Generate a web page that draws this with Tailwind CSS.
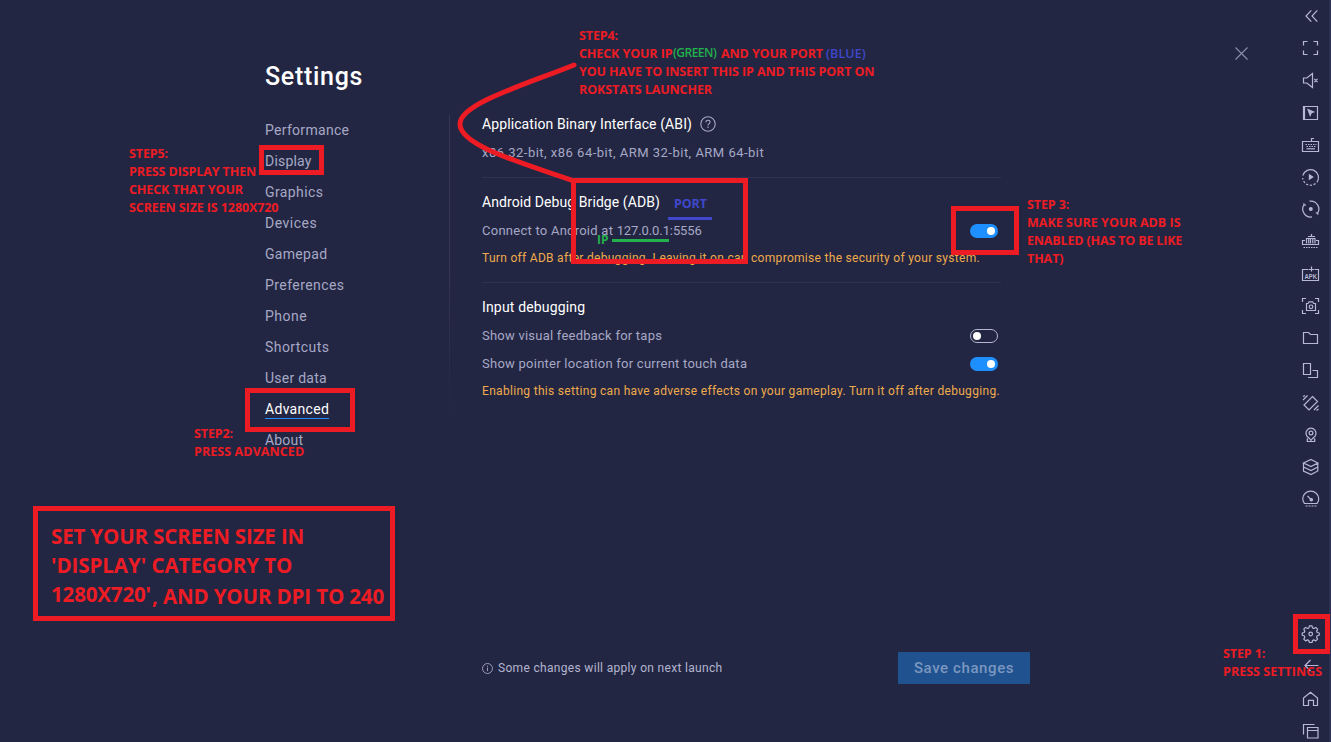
<!DOCTYPE html>
<html lang="en">
<head>
<meta charset="utf-8">
<title>Settings</title>
<script src="https://cdn.jsdelivr.net/npm/@tailwindcss/browser@4"></script>
</head>
<body class="bg-[#232642] font-['Roboto',sans-serif] text-[#a6a8c6] overflow-hidden">
<div class="relative flex h-[742px] w-[1331px] overflow-hidden">

  <!-- Category list -->
  <div class="w-[449px] shrink-0 pl-[265px] pt-[61px]">
    <h1 class="h-8 text-[25px] leading-8 font-medium tracking-[0.7px] text-white">Settings</h1>
    <nav class="mt-[22px] flex flex-col items-start text-[14px] leading-[31px]">
      <a class="h-[31px] tracking-[0.3px]">Performance</a>
      <a class="h-[31px] tracking-[0.2px]">Display</a>
      <a class="h-[31px] tracking-[0.41px]">Graphics</a>
      <a class="h-[31px] tracking-[0.5px]">Devices</a>
      <a class="h-[31px] tracking-[0.3px]">Gamepad</a>
      <a class="h-[31px] tracking-[0.43px]">Preferences</a>
      <a class="h-[31px] tracking-[0.5px]">Phone</a>
      <a class="h-[31px] tracking-[0.43px]">Shortcuts</a>
      <a class="h-[31px] tracking-[0.25px]">User data</a>
      <a class="flex h-[31px] flex-col tracking-[0.3px] text-white"><span class="h-6">Advanced</span><span class="h-px w-full bg-[#1e90ff]"></span></a>
      <a class="h-[31px] tracking-[0.18px]">About</a>
    </nav>
  </div>
  <div class="mt-[115px] h-[302px] w-px shrink-0 bg-linear-to-b from-[#343654] via-[#343654] to-[#232642]"></div>

  <!-- Settings panel -->
  <main class="flex w-[850px] shrink-0 flex-col pl-[32px] pt-[110px]">
    <section class="w-[519px] border-b border-[#2f3150] pb-[10px]">
      <h2 class="flex h-7 items-center gap-2 text-[14px] tracking-[0.1px] text-white">Application Binary Interface (ABI)
        <svg class="size-[16px]" viewBox="0 0 16 16" fill="none" stroke="#a6a8c6" stroke-width="1.1"><circle cx="8" cy="8" r="7.2"/><path d="M5.9 6.3c0-1.3.9-2.1 2.1-2.1s2.1.8 2.1 1.9c0 1.5-2.1 1.5-2.1 3.3M8 10.6v1.3"/></svg>
      </h2>
      <p class="mt-px h-7 text-[13px] leading-7 tracking-[0.49px]">x86 32-bit, x86 64-bit, ARM 32-bit, ARM 64-bit</p>
    </section>
    <section class="w-[519px] border-b border-[#2f3150] pt-[10px] pb-[10px]">
      <h2 class="h-7 text-[14px] leading-7 tracking-[0.08px] text-white">Android Debug Bridge (ADB)</h2>
      <div class="flex h-7 items-center justify-between pr-[3px] pt-px">
        <p class="text-[13px] tracking-[0.25px]">Connect to Android at <span class="tracking-[-0.1px]">127.0.0.1:5556</span></p>
        <span class="flex h-[14px] w-7 items-center justify-end rounded-full bg-[#1e8fff] pr-[3px]"><i class="size-2 rounded-full bg-white"></i></span>
      </div>
      <p class="h-7 whitespace-nowrap text-[12px] leading-7 tracking-[0.3px] text-[#eeab4d]">Turn off ADB after debugging. Leaving it on can compromise the security of your system.</p>
    </section>
    <section class="w-[519px] pt-[10px]">
      <h2 class="h-7 text-[14px] leading-7 tracking-[0.16px] text-white">Input debugging</h2>
      <div class="mt-px flex h-7 items-center justify-between pr-[3px]">
        <p class="text-[13px] tracking-[0.23px]">Show visual feedback for taps</p>
        <span class="flex h-[14px] w-7 items-center rounded-full border border-[#b4b6d0] pl-[2px]"><i class="size-2 rounded-full bg-white"></i></span>
      </div>
      <div class="flex h-7 items-center justify-between pr-[3px]">
        <p class="text-[13px] tracking-[0.25px]">Show pointer location for current touch data</p>
        <span class="flex h-[14px] w-7 items-center justify-end rounded-full bg-[#1e8fff] pr-[3px]"><i class="size-2 rounded-full bg-white"></i></span>
      </div>
      <p class="h-7 whitespace-nowrap text-[12px] leading-[26px] tracking-[0.31px] text-[#eeab4d]">Enabling this setting can have adverse effects on your gameplay. Turn it off after debugging.</p>
    </section>
    <footer class="mt-auto mb-[58px] flex h-8 w-[548px] items-center justify-between">
      <p class="flex items-center gap-[5px] text-[12px] tracking-[0.32px] text-[#b3b5d0]">
        <svg class="size-[11px]" viewBox="0 0 11 11" fill="none" stroke="#a6a8c6" stroke-width="0.9"><circle cx="5.5" cy="5.5" r="5"/><path d="M5.5 4.6v3.6M5.5 2.7v1.1"/></svg>
        Some changes will apply on next launch</p>
      <button class="h-8 w-[132px] bg-[#1f528f] text-[15px] font-medium tracking-[0.6px] text-[#7b96bf]">Save changes</button>
    </footer>
  </main>

  <!-- Side toolbar -->
  <aside class="flex w-[31px] shrink-0 flex-col border-r-2 border-[#2c3054] pt-[6px] [&_svg]:size-5 [&_svg]:fill-none [&_svg]:stroke-[#b7b8d6] [&_svg]:stroke-[1.2px]">
    <div class="flex h-[503px] w-5 flex-col justify-between">
      <svg viewBox="0 0 20 20"><path d="M11.3 4.3 6 10l5.3 5.7M17.3 4.3 12 10l5.3 5.7"/></svg>
      <svg viewBox="0 0 20 20"><path d="M3.5 7.5v-4h4M13.5 3.5h4v4M17.5 12.5v4h-4M7.5 16.5h-4v-4"/></svg>
      <svg viewBox="0 0 20 20"><path d="M3.5 8v5h3.3l5.7 4.5v-14L6.8 8zM14.3 8.8l3.2 3.4M17.5 8.8l-3.2 3.4"/></svg>
      <svg viewBox="0 0 20 20"><path d="M3.5 3.5h14v13h-14zM4.5 3.5v13"/><path d="M7 5.5l8.3 3.4-3.6 1.4-1.6 3.7z" fill="#b7b8d6" stroke="none"/></svg>
      <svg viewBox="0 0 20 20"><path d="M2.5 6.5h16v10h-16zM11.5 6.5V3.5H14"/><path d="M5.5 9.5h11M6.5 11.5h9.5" stroke-dasharray="1.5 1"/><path d="M6.5 13.8h8.5"/></svg>
      <svg viewBox="0 0 20 20"><path d="M2.8 8.5A8 8 0 1 1 17 15.3"/><path d="M15.5 16.6A8 8 0 0 1 2.7 11" stroke-dasharray="2.2 1.6"/><path d="M8.8 6.8v6.4l5-3.2z" fill="#b7b8d6" stroke="none"/></svg>
      <svg viewBox="0 0 20 20"><path d="M9.5 2.2A8 8 0 0 1 17.6 14.3M15.8 13.8h2v2M12 17.9A8 8 0 0 1 4 5.7M5.9 6.2h-2v-2"/><circle cx="10.8" cy="10" r="2" fill="#b7b8d6" stroke="none"/></svg>
      <svg viewBox="0 0 20 20"><path d="M11.5 3v3M8 5.5h7M5 9.5H2.5v4h16v-4H16"/><path d="M6.5 12.5v-5h8.5v5M8.7 8v4.5M10.5 8v4.5M12.8 8v4.5"/><path d="M3.5 16.500h14" stroke-dasharray="1.5 1"/></svg>
      <svg viewBox="0 0 20 20"><path d="M8.5 5.5h-6v11h16v-11h-4M11.5 2.5v5M9 5.5h5"/><text x="4.6" y="14.8" textLength="12.4" lengthAdjust="spacingAndGlyphs" class="fill-[#b7b8d6] stroke-none font-['Liberation_Sans',sans-serif] text-[8px] font-bold">APK</text></svg>
      <svg viewBox="0 0 20 20"><path d="M2.5 6V2.5H6M15 2.5h3.5V6M18.5 14v3.5H15M6 17.5H2.5V14M6.5 7.5H8l1-1.7h3.6l1 1.7h1.9v7h-9z"/><circle cx="11" cy="10.8" r="1.8"/></svg>
      <svg viewBox="0 0 20 20"><path d="M3.5 4.5h5l2 2h7v9h-14z"/></svg>
      <svg viewBox="0 0 20 20"><path d="M3.5 3.5h7v11h-7zM12.5 10.5h5v7h-9.5"/></svg>
      <svg viewBox="0 0 20 20"><path d="M12.5 4.5 17.5 9.5 9 18 4 13zM3 8l4.5-4.5M3 4.5l2-1M14 18l4.5-4.5M16.5 18.5 18.5 17"/></svg>
      <svg viewBox="0 0 20 20"><path d="M8.8 13.7a5 5 0 1 1 4.4 0L11 16.3zM8.3 14.7l-1 .3v2.5h7.4V15l-1-.3"/><circle cx="11" cy="9" r="1.9"/></svg>
      <svg viewBox="0 0 20 20"><path d="M11 2.5 17.8 6 11 9.5 3.5 6zM3.5 6v8L11 17.5l6.8-3.5V6M3.5 10 11 13.5l6.8-3.5"/></svg>
      <svg viewBox="0 0 20 20"><path d="M4.5 14.5A8 7.6 0 1 1 17 14.5zM7.5 7l3.7 3.7"/><circle cx="11.3" cy="10.7" r="1.2" fill="#b7b8d6"/><path d="M5.5 17h11" stroke-dasharray="2 1"/></svg>
    </div>
    <div class="mt-[115px] flex h-[117px] w-5 flex-col justify-between">
      <svg viewBox="0 0.5 20 20"><path stroke-linejoin="round" d="M9.4 2.4h2.6l.5 2 1.4.6 1.9-1.1 1.8 1.8-1 1.9.6 1.4 2 .5v2.2l-2 .6-.6 1.4 1 1.9-1.8 1.8-1.900-1-1.400.6-.5 2H9.400l-.5-2-1.400-.6-1.900 1-1.800-1.800 1-1.900-.6-1.400-2-.6V9.500l2-.5.6-1.400-1-1.900 1.800-1.800L7.500 5l1.400-.6z"/><circle cx="10.7" cy="10.5" r="1.8"/></svg>
      <svg viewBox="0 0 20 20"><path d="M18.5 9.5H5M10.5 4 5 9.5l5.5 5.5"/></svg>
      <svg viewBox="0 0 20 20"><path d="M3.5 9 10.5 3.3 17.5 9v7.5h-4v-5.2h-5v5.2h-5z"/></svg>
      <svg viewBox="0 0 20 20"><path d="M3.5 13.5v-10h11M7.5 6.5h10.5v10.5H7.5zM7.5 9.5h10.5"/></svg>
    </div>
  </aside>

  <!-- Close button -->
  <svg class="absolute left-[1235px] top-[47px] h-[13px] w-[13px]" viewBox="0 0 13 13" stroke="#8c8eae" stroke-width="1.1"><path d="M.5.5l12 12M12.5.5l-12 12"/></svg>

  <!-- Annotations -->
  <div class="absolute inset-0 whitespace-nowrap font-['Open_Sans',sans-serif] text-[12.5px] leading-[18px] font-bold tracking-[-0.1px] text-[#ed1c24]">
    <svg class="absolute left-0 top-0 h-[300px] w-[800px]" fill="none" stroke="#ed1c24" stroke-width="5"><path stroke-linecap="round" d="M574 65C530 83 461 103 460 123.5C459 143 505 158 574 181"/></svg>
    <div class="absolute left-[571px] top-[178px] h-[86px] w-[177px] border-5 border-[#ed1c24]"></div>
    <div class="absolute left-[259px] top-[145px] h-[30px] w-[65px] border-5 border-[#ed1c24]"></div>
    <div class="absolute left-[245px] top-[388px] h-[44px] w-[110px] border-5 border-[#ed1c24]"></div>
    <div class="absolute left-[951px] top-[206px] h-[49px] w-[68px] border-5 border-[#ed1c24]"></div>
    <div class="absolute left-[1293px] top-[614px] h-[40px] w-[37px] border-5 border-[#ed1c24]"></div>
    <div class="absolute left-[33px] top-[506px] h-[115px] w-[362px] border-5 border-[#ed1c24]"></div>

    <div class="absolute left-[579px] top-[27px]">
      <p>STEP4:</p>
      <p>CHECK YOUR IP</p>
      <p>YOU HAVE TO INSERT THIS IP AND THIS PORT ON</p>
      <p>ROKSTATS LAUNCHER</p>
    </div>
    <span class="absolute left-[673px] top-[44px] text-[12px] font-semibold tracking-[-0.5px] text-[#22b14c]">(GREEN)</span>
    <span class="absolute left-[721px] top-[45px]">AND YOUR PORT</span>
    <span class="absolute left-[826px] top-[45px] font-semibold tracking-[0.1px] text-[#3f48cc]">(BLUE)</span>

    <div class="absolute left-[129px] top-[145px]">
      <p>STEP5:</p>
      <p>PRESS DISPLAY THEN</p>
      <p>CHECK THAT YOUR</p>
      <p>SCREEN SIZE IS 1280X720</p>
    </div>
    <div class="absolute left-[194px] top-[425px]">
      <p>STEP2:</p>
      <p class="tracking-[0.08px]">PRESS ADVANCED</p>
    </div>
    <div class="absolute left-[1027px] top-[196px]">
      <p>STEP 3:</p>
      <p class="tracking-[0.03px]">MAKE SURE YOUR ADB IS</p>
      <p class="tracking-[-0.16px]">ENABLED (HAS TO BE LIKE</p>
      <p>THAT)</p>
    </div>
    <div class="absolute left-[1223px] top-[645px]">
      <p>STEP 1:</p>
      <p class="tracking-[0.03px]">PRESS SETTINGS</p>
    </div>

    <div class="absolute left-[51px] top-[522px] text-[20.5px] leading-[29px] tracking-[-0.15px]">
      <p>SET YOUR SCREEN SIZE IN</p>
      <p class="tracking-[-0.05px]">'DISPLAY' CATEGORY TO</p>
      <p>1280X720'</p>
    </div>
    <span class="absolute left-[152px] top-[582px] text-[20.5px] leading-[29px] tracking-[-0.13px]">, AND YOUR DPI TO 240</span>

    <span class="absolute left-[674px] top-[195px] tracking-[-0.1px] text-[#3f48cc]">PORT</span>
    <div class="absolute left-[668px] top-[217px] h-[3px] w-[44px] bg-[#3f48cc]"></div>
    <span class="absolute left-[597px] top-[231px] text-[12px] tracking-normal text-[#22b14c]">IP</span>
    <div class="absolute left-[612px] top-[239px] h-[3px] w-[57px] bg-[#22b14c]"></div>
  </div>
</div>
</body>
</html>
